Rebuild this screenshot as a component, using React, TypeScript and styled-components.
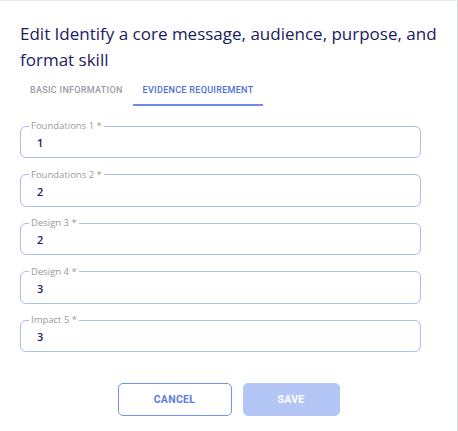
import { type ReactElement } from 'react'
import styled, { createGlobalStyle } from 'styled-components'

const GlobalStyle = createGlobalStyle`
  html, body {
    margin: 0;
    padding: 0;
    background: #ffffff;
  }
`

const Dialog = styled.div`
  box-sizing: border-box;
  width: 458px;
  height: 431px;
  border-top: 1px solid #e4e7f0;
  border-right: 1px solid #d3d6e2;
  background: #ffffff;
  display: flex;
  flex-direction: column;
`

const Title = styled.h2`
  margin: 0;
  padding: 20px 20px 0 20px;
  font-family: 'Open Sans', sans-serif;
  font-size: 17px;
  font-weight: 500;
  line-height: 26px;
  color: #1b2060;
`

const TabBar = styled.div`
  display: flex;
  padding: 0 20px;
  margin-top: 3px;
`

const Tab = styled.div<{ $active?: boolean }>`
  padding: 0 10px;
  height: 28px;
  display: flex;
  align-items: center;
  font-family: Roboto, sans-serif;
  font-size: 9px;
  font-weight: 500;
  letter-spacing: 0.3px;
  text-transform: uppercase;
  color: ${props => (props.$active ? '#4c6fd9' : '#9a9ca6')};
  border-bottom: 2px solid ${props => (props.$active ? '#6d8ce8' : 'transparent')};
`

const Fields = styled.div`
  display: flex;
  flex-direction: column;
  gap: 11.5px;
  padding: 15px 36px 0 20px;
`

const Field = styled.fieldset`
  box-sizing: border-box;
  margin: 0;
  padding: 5px 16px 7px 16px;
  border: 1px solid #a9bcf4;
  border-radius: 6px;
`

const Legend = styled.legend`
  margin-left: -8px;
  padding: 0 2px;
  font-family: 'Open Sans', sans-serif;
  font-size: 9.5px;
  line-height: 10px;
  color: #9a9a9a;
`

const Value = styled.div`
  font-family: 'Open Sans', sans-serif;
  font-size: 11px;
  line-height: 14px;
  font-weight: 600;
  color: #1b2060;
`

const Actions = styled.div`
  display: flex;
  justify-content: center;
  gap: 11px;
  margin-top: 31px;
`

const Button = styled.button<{ $primary?: boolean }>`
  box-sizing: border-box;
  height: 33px;
  width: ${props => (props.$primary ? '97px' : '114px')};
  border-radius: 5px;
  font-family: Roboto, sans-serif;
  font-size: 10.5px;
  font-weight: 700;
  letter-spacing: 0.3px;
  text-transform: uppercase;
  cursor: pointer;
  border: 1px solid ${props => (props.$primary ? '#b4c6f6' : '#7293f0')};
  background: ${props => (props.$primary ? '#b4c6f6' : '#ffffff')};
  color: ${props => (props.$primary ? '#ffffff' : '#5a7de4')};
`

const fields = [
  { label: 'Foundations 1', value: '1' },
  { label: 'Foundations 2', value: '2' },
  { label: 'Design 3', value: '2' },
  { label: 'Design 4', value: '3' },
  { label: 'Impact 5', value: '3' },
]

function App(): ReactElement {
  return (
    <>
      <GlobalStyle />
      <Dialog>
        <Title>Edit Identify a core message, audience, purpose, and format skill</Title>
        <TabBar>
          <Tab>Basic Information</Tab>
          <Tab $active>Evidence Requirement</Tab>
        </TabBar>
        <Fields>
          {fields.map(f => (
            <Field key={f.label}>
              <Legend>{f.label} *</Legend>
              <Value>{f.value}</Value>
            </Field>
          ))}
        </Fields>
        <Actions>
          <Button>Cancel</Button>
          <Button $primary>Save</Button>
        </Actions>
      </Dialog>
    </>
  )
}

export default App
